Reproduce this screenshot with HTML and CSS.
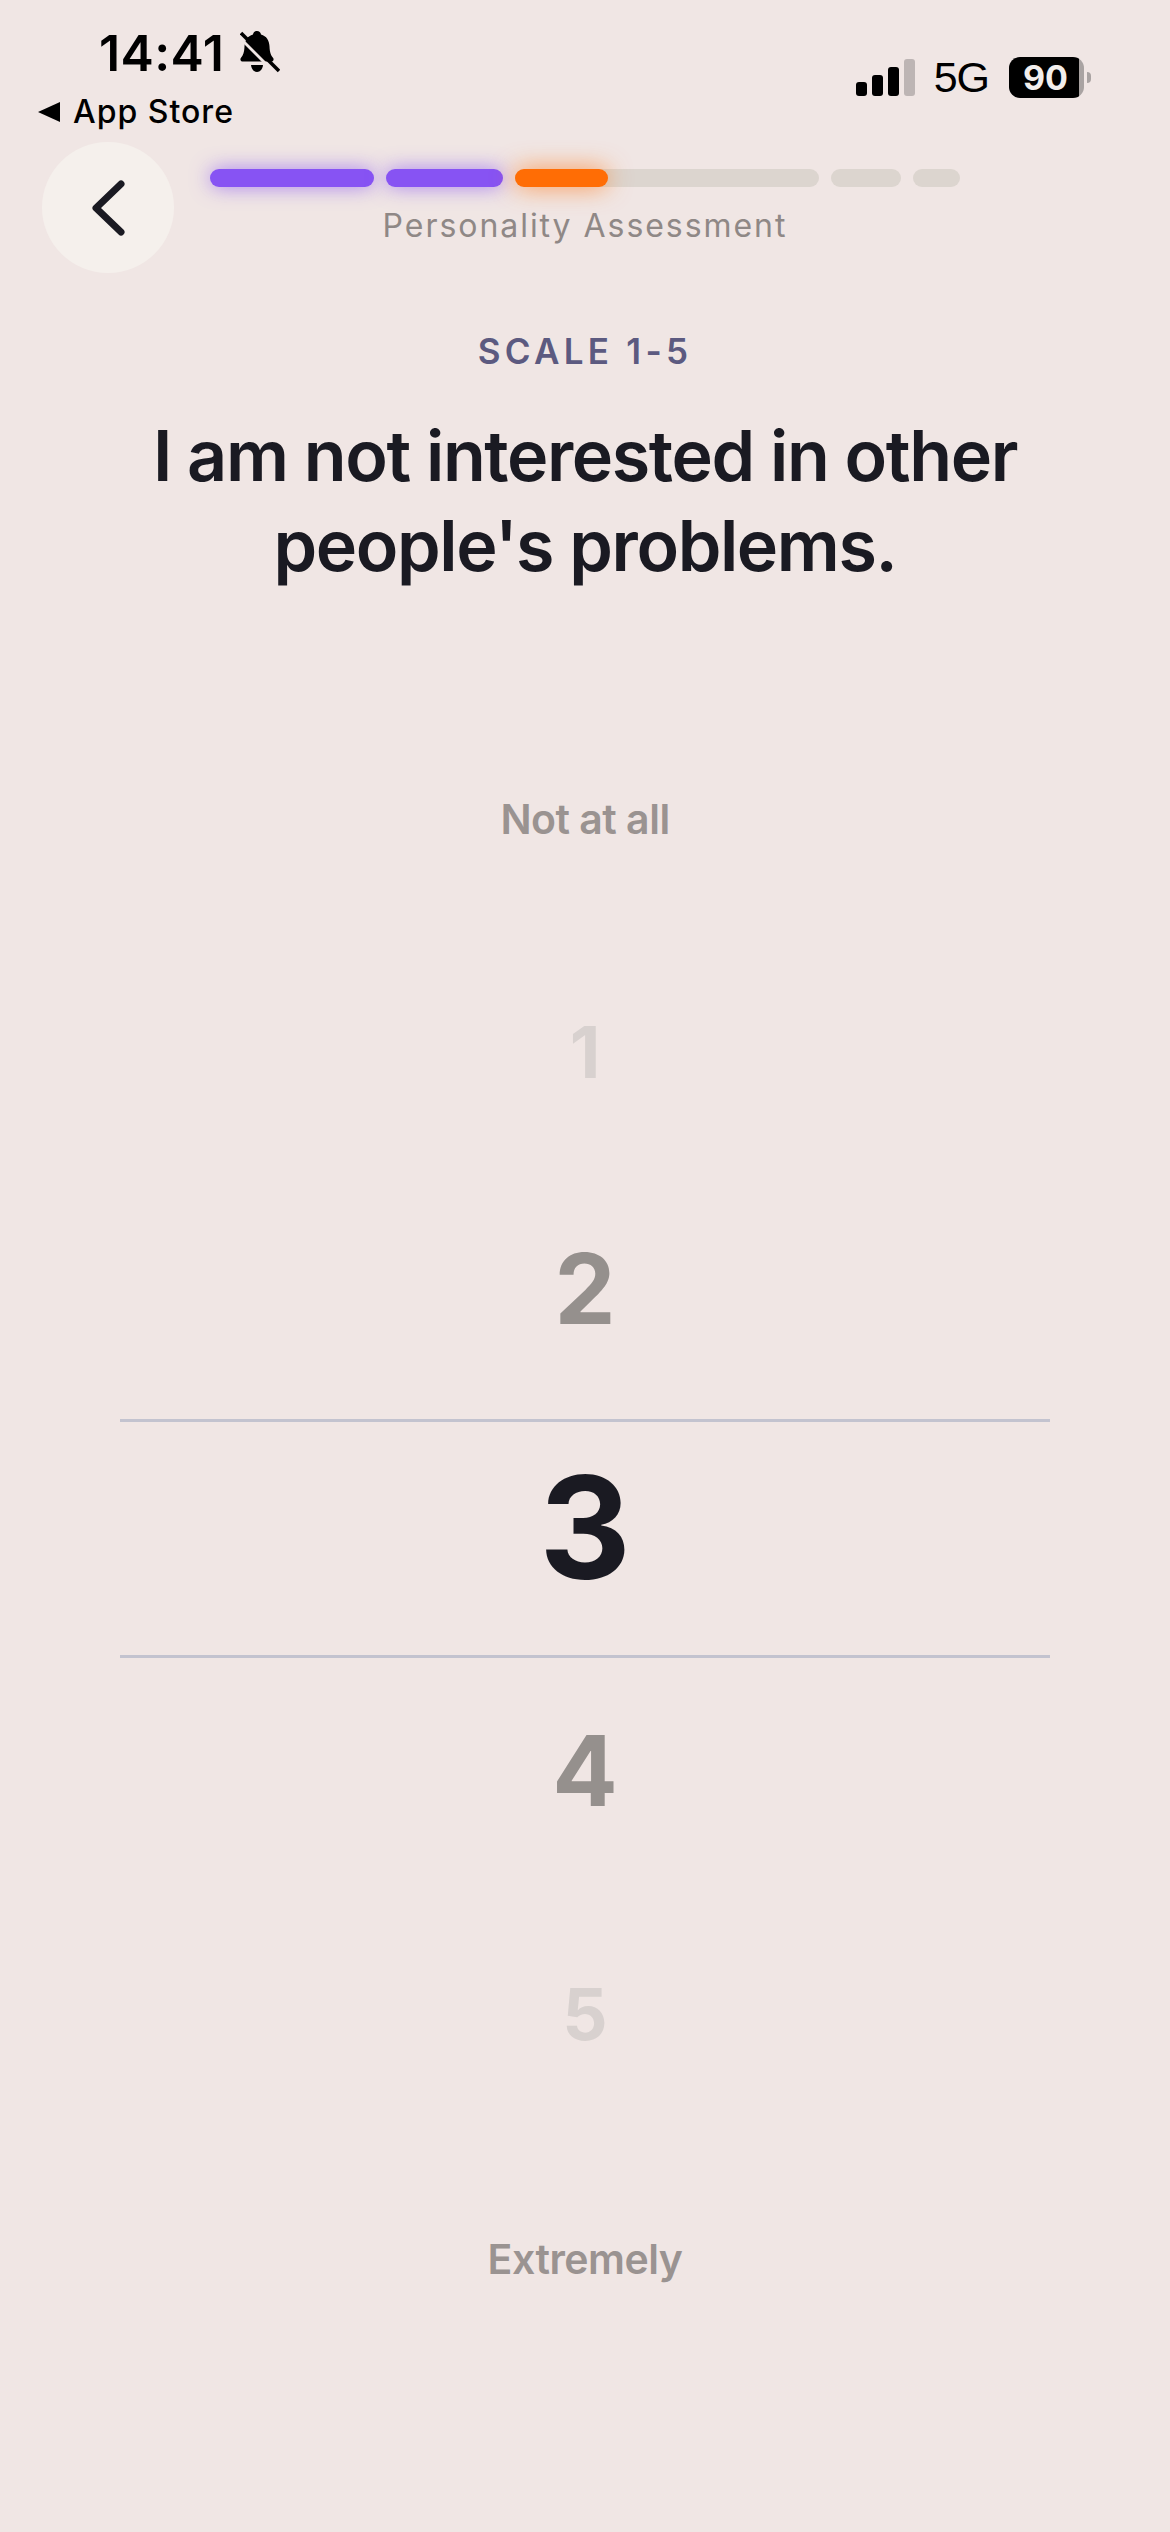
FILE: index.html
```html
<!DOCTYPE html>
<html lang="en">
<head>
  <meta charset="UTF-8" />
  <meta name="viewport" content="width=device-width, initial-scale=1.0" />
  <title>Personality Assessment</title>
  <link rel="stylesheet" href="styles.css">
</head>
<body>
  <div class="phone">
    <div class="status">
      <div class="status-left">
        <div class="time-row">
          <span class="time">14:41</span>
          <svg class="bell" viewBox="0 0 40 44" width="40" height="44">
            <path d="M17 0c2.200 0 3.700 1.500 4 3.400 5.500 1.500 8.300 6 8.500 11.800.2 6 1.300 9 3.500 11.600 1.300 1.700.4 3.700-2 3.700H3c-2.400 0-3.300-2-2-3.700 2.200-2.600 3.300-5.600 3.500-11.600C4.700 9.400 7.500 4.900 13 3.400 13.300 1.500 14.800 0 17 0z" fill="#000"/>
            <path d="M11 34h12c-.4 4-2.800 7-6 7s-5.600-3-6-7z" fill="#000"/>
            <path d="M-2 5 36 43" stroke="#f0e6e4" stroke-width="3"/>
            <path d="M1 2 39 40" stroke="#000" stroke-width="3.500"/>
          </svg>
        </div>
        <div class="back-app">
          <svg viewBox="0 0 22 20" width="22" height="20"><path d="M0 10 22 0v20z" fill="#000"/></svg>
          <span>App Store</span>
        </div>
      </div>
      <div class="status-right">
        <div class="signal">
          <i class="sig-1"></i><i class="sig-2"></i><i class="sig-3"></i><i class="sig-4"></i>
        </div>
        <span class="net">5G</span>
        <div class="battery">
          <div class="battery-body"><span>90</span></div>
          <div class="battery-nub"></div>
        </div>
      </div>
    </div>

    <div class="top">
      <button class="back-btn">
        <svg viewBox="0 0 36 56" width="36" height="56">
          <path d="M31 4 6 28l25 24" fill="none" stroke="#1a1a22" stroke-width="7" stroke-linecap="round" stroke-linejoin="round"/>
        </svg>
      </button>
      <div class="progress-wrap">
        <div class="progress">
          <div class="seg seg-1 done"></div>
          <div class="seg seg-2 done"></div>
          <div class="seg seg-3"><div class="seg-fill"></div></div>
          <div class="seg seg-4"></div>
          <div class="seg seg-5"></div>
        </div>
        <div class="section-name">Personality Assessment</div>
      </div>
    </div>

    <div class="question">
      <div class="kicker">SCALE 1-5</div>
      <h1>I am not interested in other people's problems.</h1>
    </div>

    <div class="wheel">
      <div class="row label label-low">Not at all</div>
      <div class="row num far num-1">1</div>
      <div class="row num near num-2">2</div>
      <div class="row num picked">3</div>
      <div class="row num near num-4">4</div>
      <div class="row num far num-5">5</div>
      <div class="row label label-high">Extremely</div>
    </div>
  </div>
</body>
</html>
```

FILE: styles.css
```css
html, body {
  margin: 0;
  padding: 0;
  height: 100%;
  background-color: #f0e6e4;
  overflow: hidden;
  font-family: 'Inter', sans-serif;
}
.phone {
  height: 2532px;
  color: #1a1a22;
}

/* status bar */
.status {
  display: flex;
  justify-content: space-between;
  align-items: flex-start;
  height: 142px;
  padding: 0 79px 0 38px;
  box-sizing: border-box;
  color: #000;
}
.status-left {
  display: flex;
  flex-direction: column;
  padding-top: 26px;
}
.time-row {
  display: flex;
  align-items: center;
  gap: 16px;
  padding-left: 61px;
  height: 54px;
}
.time {
  font-size: 50px;
  font-weight: 600;
  line-height: 54px;
  letter-spacing: 0.4px;
}
.back-app {
  display: flex;
  align-items: center;
  gap: 13px;
  margin-top: 12px;
  font-size: 32px;
  font-weight: 500;
  line-height: 40px;
  letter-spacing: 1px;
}
.status-right {
  display: flex;
  align-items: center;
  padding-top: 57px;
}
.signal {
  display: flex;
  align-items: flex-end;
  gap: 5px;
  height: 37px;
}
.signal i {
  display: block;
  width: 11px;
  background: #000;
  border-radius: 3px;
}
.sig-1 { height: 14px; }
.sig-2 { height: 21px; }
.sig-3 { height: 29px; }
.signal .sig-4 { height: 37px; background: #bdb5b4; }
.net {
  margin-left: 19px;
  font-family: 'Liberation Sans', sans-serif;
  font-size: 43px;
  line-height: 41px;
  letter-spacing: -1px;
}
.battery {
  display: flex;
  align-items: center;
  margin-left: 20px;
}
.battery-body {
  width: 75px;
  height: 41px;
  border-radius: 11px;
  background: linear-gradient(to right, #000 70px, #a9a3a2 70px);
  color: #f2eeec;
  font-size: 34px;
  font-weight: 700;
  line-height: 41px;
  padding-left: 14px;
  box-sizing: border-box;
}
.battery-nub {
  width: 4px;
  height: 11px;
  margin-left: 3px;
  background: #a9a3a2;
  border-radius: 0 4px 4px 0;
}

/* back button + progress */
.top {
  position: relative;
  height: 131px;
}
.back-btn {
  position: absolute;
  left: 42px;
  top: 0;
  width: 132px;
  height: 131px;
  border: none;
  border-radius: 50%;
  background: #f5f0ec;
  padding: 0;
  display: flex;
  align-items: center;
  justify-content: center;
}
.progress-wrap {
  display: flex;
  flex-direction: column;
  align-items: center;
  padding-top: 27px;
}
.progress {
  display: flex;
  gap: 12px;
  width: 750px;
}
.seg {
  height: 18px;
  border-radius: 9px;
  background: #dcd5cf;
}
.seg-1 { width: 164px; }
.seg-2 { width: 117px; }
.seg-3 { width: 304px; }
.seg-4 { width: 70px; }
.seg-5 { width: 47px; }
.seg.done {
  background: #8753f3;
  box-shadow: 0 0 20px rgba(135, 83, 243, 0.7);
}
.seg-fill {
  width: 93px;
  height: 18px;
  border-radius: 9px;
  background: #ff6d05;
  box-shadow: 0 0 24px rgba(255, 109, 5, 0.7);
}
.section-name {
  margin-top: 19px;
  font-size: 32px;
  line-height: 40px;
  letter-spacing: 1.95px;
  color: #8f8886;
}

/* question */
.question {
  text-align: center;
}
.kicker {
  margin-top: 58px;
  font-size: 35px;
  font-weight: 600;
  line-height: 40px;
  letter-spacing: 4.3px;
  color: #5c5a80;
}
.question h1 {
  width: 900px;
  margin: 40px auto 0;
  font-size: 70px;
  font-weight: 600;
  line-height: 90px;
  letter-spacing: -1.4px;
}

/* number wheel */
.wheel {
  margin-top: 117px;
}
.row {
  display: flex;
  align-items: center;
  justify-content: center;
  height: 237px;
  box-sizing: border-box;
}
.label {
  font-size: 41px;
  font-weight: 600;
  letter-spacing: -0.5px;
  color: #9a9391;
}
.label-low { padding-bottom: 16px; }
.label-high { padding-top: 17px; }
.num {
  font-weight: 700;
}
.far { font-size: 71px; color: #d8d1cf; }
.near { font-size: 97px; color: #95908d; }
.num-1, .num-2 { padding-bottom: 24px; }
.num-4 { padding-bottom: 13px; }
.picked {
  width: 930px;
  height: 239px;
  margin: 0 auto;
  padding-bottom: 24px;
  font-size: 142px;
  color: #1a1a22;
  border-top: 3px solid #c3c3cf;
  border-bottom: 3px solid #c3c3cf;
}
```
